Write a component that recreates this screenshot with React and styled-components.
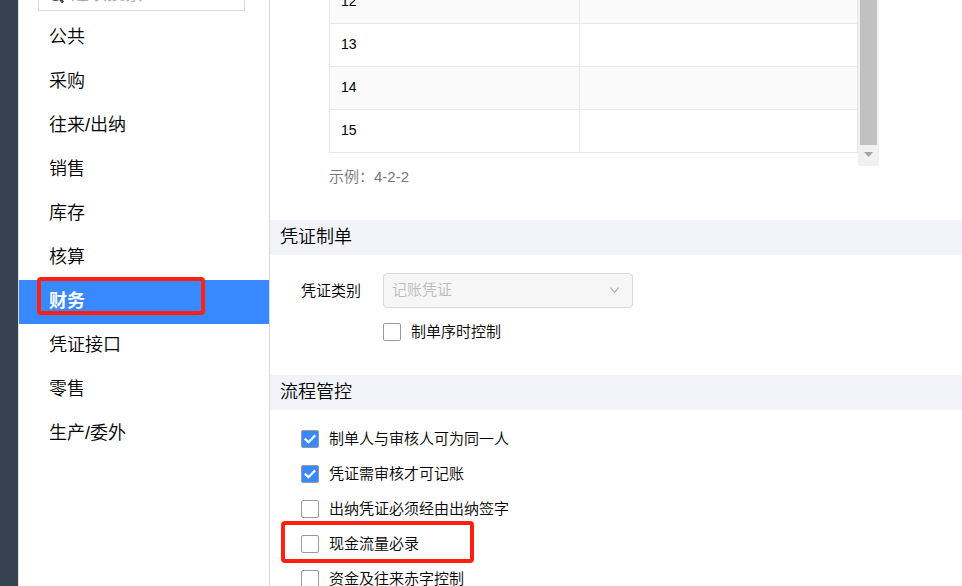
import React from 'react';
import styled, { createGlobalStyle, css } from 'styled-components';

const modules = ['公共', '采购', '往来/出纳', '销售', '库存', '核算', '财务', '凭证接口', '零售', '生产/委外'];
const codeRows = [12, 13, 14, 15];
const controls = [
    { id: 'same-person', label: '制单人与审核人可为同一人', checked: true },
    { id: 'audit-first', label: '凭证需审核才可记账', checked: true },
    { id: 'cashier-sign', label: '出纳凭证必须经由出纳签字' },
    { id: 'cash-flow', label: '现金流量必录', marked: true },
    { id: 'deficit', label: '资金及往来赤字控制' },
];

const SearchIcon = () => (
    <Icon width="18" height="18" viewBox="0 0 18 18" fill="none" stroke="#444" aria-hidden="true">
        <circle cx="6.5" cy="9" r="6" strokeWidth="2" />
        <path d="M10.5 13l3.5 4.5" strokeWidth="2.8" />
    </Icon>
);

const ArrowDown = () => (
    <svg width="9" height="5" viewBox="0 0 9 5" fill="#a3a3a3" aria-hidden="true">
        <path d="M0 0h9L4.5 5z" />
    </svg>
);

const Chevron = () => (
    <svg width="9" height="7" viewBox="0 0 9 7" fill="none" stroke="#aaa" strokeWidth="1.1" aria-hidden="true">
        <path d="M.5 .7l4 5 4-5" />
    </svg>
);

const CheckRow = ({ id, label, checked, marked }) => (
    <CheckLine>
        <Checkbox type="checkbox" id={id} defaultChecked={checked} />
        <Label htmlFor={id}>{label}</Label>
        {marked && <OptionMark />}
    </CheckLine>
);

const App = () => {
    return (
        <Page>
            <GlobalStyle />
            <Rail />
            <Sidebar>
                <SearchClip>
                    <SearchBox>
                        <SearchIcon />
                        <SearchInput type="text" placeholder="选项搜索" aria-label="选项搜索" />
                    </SearchBox>
                </SearchClip>
                <nav>
                    {modules.map((name) => (
                        <NavLink key={name} href="#" $active={name === '财务'}>
                            {name}
                            {name === '财务' && <NavMark />}
                        </NavLink>
                    ))}
                </nav>
            </Sidebar>
            <Main>
                <CodeArea>
                    <Scroller>
                        <TableHolder>
                            <Table>
                                <tbody>
                                    {codeRows.map((n) => (
                                        <Row key={n}>
                                            <IndexCell>{n}</IndexCell>
                                            <Cell />
                                        </Row>
                                    ))}
                                </tbody>
                            </Table>
                        </TableHolder>
                        <Track>
                            <Thumb />
                            <TrackButton type="button" aria-label="向下滚动"><ArrowDown /></TrackButton>
                        </Track>
                    </Scroller>
                    <Hint>示例：4-2-2</Hint>
                </CodeArea>

                <SectionTitle>凭证制单</SectionTitle>
                <VoucherForm>
                    <Label htmlFor="voucher-type">凭证类别</Label>
                    <SelectWrap>
                        <Select id="voucher-type" disabled>
                            <option>记账凭证</option>
                        </Select>
                        <Chevron />
                    </SelectWrap>
                    <FormOption>
                        <CheckRow id="order-control" label="制单序时控制" />
                    </FormOption>
                </VoucherForm>

                <SectionTitle>流程管控</SectionTitle>
                <ControlList>
                    {controls.map((item) => (
                        <CheckRow key={item.id} {...item} />
                    ))}
                </ControlList>
            </Main>
        </Page>
    );
};

const GlobalStyle = createGlobalStyle`
    * {
        box-sizing: border-box;
    }
    body {
        margin: 0;
        color: #000;
        background-color: #fff;
        font-family: "Liberation Sans", "Noto Sans CJK SC", sans-serif;
        font-size: 15px;
        font-weight: 350;
    }
    input, select, button {
        font: inherit;
    }
`;

const Page = styled.div`
    display: flex;
    height: 100vh;
    overflow: hidden;
`;

const Rail = styled.div`
    flex: 0 0 18px;
    background-color: #36424f;
`;

const Sidebar = styled.aside`
    flex: 0 0 252px;
    min-width: 0;
    border-left: 1px solid #e0e0e0;
    border-right: 1px solid #d9d9d9;
`;

const SearchClip = styled.div`
    display: flex;
    align-items: flex-end;
    height: 11px;
    margin: 0 24px 5px 19px;
    overflow: hidden;
`;

const SearchBox = styled.div`
    display: flex;
    flex: 1;
    align-items: center;
    gap: 4px;
    min-width: 0;
    height: 34px;
    padding: 0 10px;
    border: 1px solid #d9d9d9;
`;

const Icon = styled.svg`
    flex: none;
`;

const SearchInput = styled.input`
    flex: 1;
    min-width: 0;
    padding: 0;
    border: 0;
    outline: 0;
    background: transparent;
    font-size: 18px;
    &::placeholder {
        color: #aaa;
    }
`;

const NavLink = styled.a`
    position: relative;
    display: block;
    height: 44px;
    padding-left: 30px;
    color: #000;
    font-size: 18px;
    line-height: 43px;
    text-decoration: none;
    ${({ $active }) => $active && css`
        color: #fff;
        background-color: #3888ff;
        font-weight: 700;
    `}
`;

const Mark = styled.span`
    position: absolute;
    border: 4px solid #ff2012;
    border-radius: 4px;
    pointer-events: none;
`;

const NavMark = styled(Mark)`
    top: -3px;
    left: 18px;
    width: 168px;
    height: 38px;
`;

const OptionMark = styled(Mark)`
    top: -5px;
    left: -20px;
    width: 193px;
    height: 42px;
`;

const Main = styled.main`
    flex: 1;
    min-width: 0;
`;

const CodeArea = styled.div`
    height: 220px;
    padding-left: 59px;
`;

const Scroller = styled.div`
    display: flex;
    align-items: flex-end;
    width: 550px;
    max-width: 100%;
    height: 166px;
    overflow: hidden;
`;

const TableHolder = styled.div`
    flex: 1;
    padding-bottom: 13px;
`;

const Table = styled.table`
    width: 100%;
    table-layout: fixed;
    border-spacing: 0;
    border-left: 1px solid #e8e8e8;
`;

const Row = styled.tr`
    height: 43px;
    &:nth-child(odd) {
        background-color: #fafafa;
    }
`;

const Cell = styled.td`
    padding: 0 11px 3px;
    border-right: 1px solid #e8e8e8;
    border-bottom: 1px solid #e8e8e8;
    font-size: 14px;
`;

const IndexCell = styled(Cell)`
    width: 250px;
`;

const Track = styled.div`
    display: flex;
    flex: 0 0 21px;
    flex-direction: column;
    height: 100%;
    padding: 0 2px;
    background-color: #f1f1f1;
`;

const Thumb = styled.div`
    flex: 1;
    background-color: #c1c1c1;
`;

const TrackButton = styled.button`
    display: flex;
    align-items: center;
    justify-content: center;
    height: 21px;
    padding: 0 0 2px;
    border: 0;
    background: transparent;
`;

const Hint = styled.p`
    margin: 0;
    color: #777;
    line-height: 22px;
`;

const SectionTitle = styled.h2`
    height: 35px;
    margin: 0;
    padding-left: 10px;
    background-color: #f2f3f8;
    font-size: 18px;
    font-weight: inherit;
    line-height: 35px;
`;

const Label = styled.label`
    padding-bottom: 2px;
`;

const VoucherForm = styled.div`
    display: grid;
    grid-template-columns: 60px 250px;
    align-items: center;
    gap: 6px 22px;
    padding: 18px 0 26px 31px;
`;

const SelectWrap = styled.div`
    display: grid;
    align-items: center;
    > * {
        grid-area: 1 / 1;
    }
    > svg {
        justify-self: end;
        margin-right: 14px;
        pointer-events: none;
    }
`;

const Select = styled.select`
    width: 100%;
    height: 35px;
    padding: 0 8px 2px;
    appearance: none;
    color: #bbb;
    background-color: #f6f6f6;
    border: 1px solid #d9d9d9;
    border-radius: 4px;
    opacity: 1;
`;

const FormOption = styled.div`
    grid-column: 2;
`;

const CheckLine = styled.div`
    position: relative;
    display: flex;
    align-items: center;
    gap: 10px;
    height: 35px;
`;

const Checkbox = styled.input`
    flex: none;
    width: 18px;
    height: 18px;
    margin: 0;
    appearance: none;
    background-color: #fff;
    border: 1px solid #999;
    border-radius: 2px;
    &:checked {
        background: #3888ff url("data:image/svg+xml,%3Csvg xmlns='http://www.w3.org/2000/svg' viewBox='0 0 16 16'%3E%3Cpath d='M2.8 7.6l3.6 3.6 6.8-6.8' fill='none' stroke='white' stroke-width='2.2'/%3E%3C/svg%3E") center / 16px no-repeat;
    }
`;

const ControlList = styled.div`
    padding: 11px 0 0 31px;
`;

export default App;
